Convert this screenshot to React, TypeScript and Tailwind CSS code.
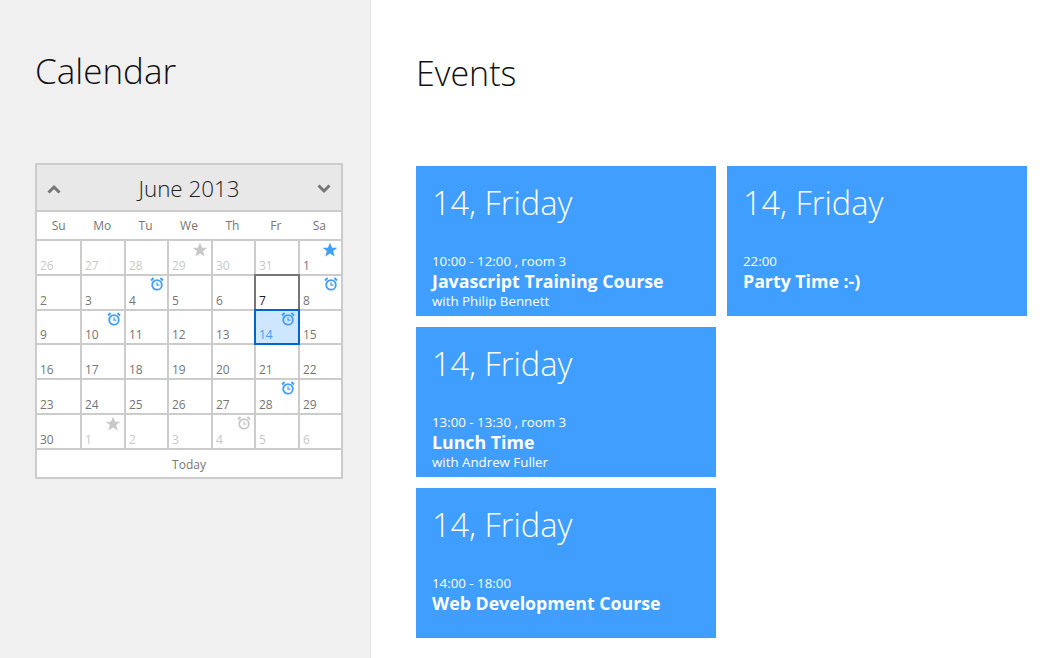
const CELLS: { d: number; muted?: boolean; icon?: "star" | "clock"; iconMuted?: boolean; today?: boolean; selected?: boolean }[] = [
  { d: 26, muted: true },
  { d: 27, muted: true },
  { d: 28, muted: true },
  { d: 29, muted: true, icon: "star", iconMuted: true },
  { d: 30, muted: true },
  { d: 31, muted: true },
  { d: 1, icon: "star" },
  { d: 2 },
  { d: 3 },
  { d: 4, icon: "clock" },
  { d: 5 },
  { d: 6 },
  { d: 7, today: true },
  { d: 8, icon: "clock" },
  { d: 9 },
  { d: 10, icon: "clock" },
  { d: 11 },
  { d: 12 },
  { d: 13 },
  { d: 14, icon: "clock", selected: true },
  { d: 15 },
  { d: 16 },
  { d: 17 },
  { d: 18 },
  { d: 19 },
  { d: 20 },
  { d: 21 },
  { d: 22 },
  { d: 23 },
  { d: 24 },
  { d: 25 },
  { d: 26 },
  { d: 27 },
  { d: 28, icon: "clock" },
  { d: 29 },
  { d: 30 },
  { d: 1, muted: true, icon: "star", iconMuted: true },
  { d: 2, muted: true },
  { d: 3, muted: true },
  { d: 4, muted: true, icon: "clock", iconMuted: true },
  { d: 5, muted: true },
  { d: 6, muted: true },
];

const EVENTS = [
  [
    { time: "10:00 - 12:00 , room 3", title: "Javascript Training Course", who: "with Philip Bennett" },
    { time: "13:00 - 13:30 , room 3", title: "Lunch Time", who: "with Andrew Fuller" },
    { time: "14:00 - 18:00", title: "Web Development Course" },
  ],
  [{ time: "22:00", title: "Party Time :-)" }],
];

const Star = ({ className }: { className: string }) => (
  <svg viewBox="0 0 16 16" className={className} fill="currentColor">
    <path d="M8 .8l2.1 5h5.3l-4.3 3.3 1.6 5.5L8 11.4l-4.7 3.2 1.6-5.5L.6 5.8h5.3z" />
  </svg>
);

const Clock = ({ className }: { className: string }) => (
  <svg viewBox="0 0 14 14" className={className} fill="none" stroke="currentColor">
    <circle cx="7" cy="7.9" r="4.8" strokeWidth="1.8" />
    <path d="M7 5.2v3h2.4" strokeWidth="1.2" />
    <path d="M1 3.4L3.6 1M13 3.4L10.4 1" strokeWidth="2" />
  </svg>
);

const Cell = ({ cell }: { cell: (typeof CELLS)[number] }) => {
  let box = "bg-white text-[#767676]";
  if (cell.muted) box = "bg-white text-[#c8c8c8]";
  if (cell.today) box = "relative z-10 bg-white text-[#222222] outline-2 outline-[#767676]";
  if (cell.selected) box = "relative z-20 bg-[#cfe6ff] text-[#3f9eff] outline-2 outline-[#0066cc]";
  const tint = cell.iconMuted ? "text-[#c8c8c8]" : "text-[#3f9eff]";
  return (
    <div className={`flex flex-col justify-between pl-[3px] ${box}`}>
      <div className="flex h-[17px] justify-end pt-[1px] pr-[3px]">
        {cell.icon === "star" && <Star className={`h-[16px] w-[16px] ${tint}`} />}
        {cell.icon === "clock" && <Clock className={`h-[14px] w-[14px] ${tint}`} />}
      </div>
      <span className="text-[12px] leading-[16px]">{cell.d}</span>
    </div>
  );
};

const EventCard = ({ time, title, who }: { time: string; title: string; who?: string }) => (
  <div className="flex h-[150px] w-[300px] flex-col bg-[#3f9eff] px-[16px] text-white">
    <div className="mt-[16px] h-[70px] text-[32.5px] leading-[42px] font-light">14, Friday</div>
    <div className="text-[13.3px] leading-[18px]">{time}</div>
    <div className="text-[17.75px] leading-[23px] font-bold">{title}</div>
    {who && <div className="text-[13.3px] leading-[16px]">{who}</div>}
  </div>
);

export default function App() {
  return (
    <div className="flex h-[658px] w-[1048px] overflow-hidden bg-white font-['Open_Sans',sans-serif]">
      <aside className="h-full w-[371px] shrink-0 border-r border-[#e2e2e2] bg-[#f0f0f0] pl-[35px]">
        <h1 className="mt-[49px] h-[114px] text-[35px] leading-[44px] font-light text-[#111111]">Calendar</h1>
        <div className="w-[308px] border-2 border-[#cccccc] bg-[#cccccc]">
          <div className="flex h-[45px] items-center justify-between bg-[#e8e8e8] px-[10px] pt-[2px]">
            <svg viewBox="0 0 14 10" className="h-[10px] w-[14px] text-[#767676]" fill="none" stroke="currentColor" strokeWidth="3">
              <path d="M1.5 8.5L7 3l5.5 5.5" />
            </svg>
            <span className="text-[22.4px] font-light text-[#222222]">June 2013</span>
            <svg viewBox="0 0 14 10" className="h-[10px] w-[14px] text-[#767676]" fill="none" stroke="currentColor" strokeWidth="3">
              <path d="M1.5 1.5L7 7l5.5-5.5" />
            </svg>
          </div>
          <div className="mt-[2px] grid h-[27px] grid-cols-7 items-center bg-white text-center text-[12px] text-[#767676]">
            {["Su", "Mo", "Tu", "We", "Th", "Fr", "Sa"].map((day) => (
              <span key={day}>{day}</span>
            ))}
          </div>
          <div className="mt-[2px] grid grid-cols-[43px_42px_41px_42px_41px_42px_41px] grid-rows-[33px_33px_32px_33px_33px_33px] gap-[2px]">
            {CELLS.map((cell, i) => (
              <Cell key={i} cell={cell} />
            ))}
          </div>
          <div className="mt-[2px] flex h-[27px] items-center justify-center bg-white pt-[2px] text-[12px] text-[#767676]">Today</div>
        </div>
      </aside>
      <main className="pl-[45px]">
        <h2 className="mt-[51px] h-[115px] text-[34px] leading-[44px] font-light text-[#111111]">Events</h2>
        <div className="flex gap-[11px]">
          {EVENTS.map((col, i) => (
            <div key={i} className="flex flex-col gap-[11px]">
              {col.map((ev) => (
                <EventCard key={ev.title} {...ev} />
              ))}
            </div>
          ))}
        </div>
      </main>
    </div>
  );
}
